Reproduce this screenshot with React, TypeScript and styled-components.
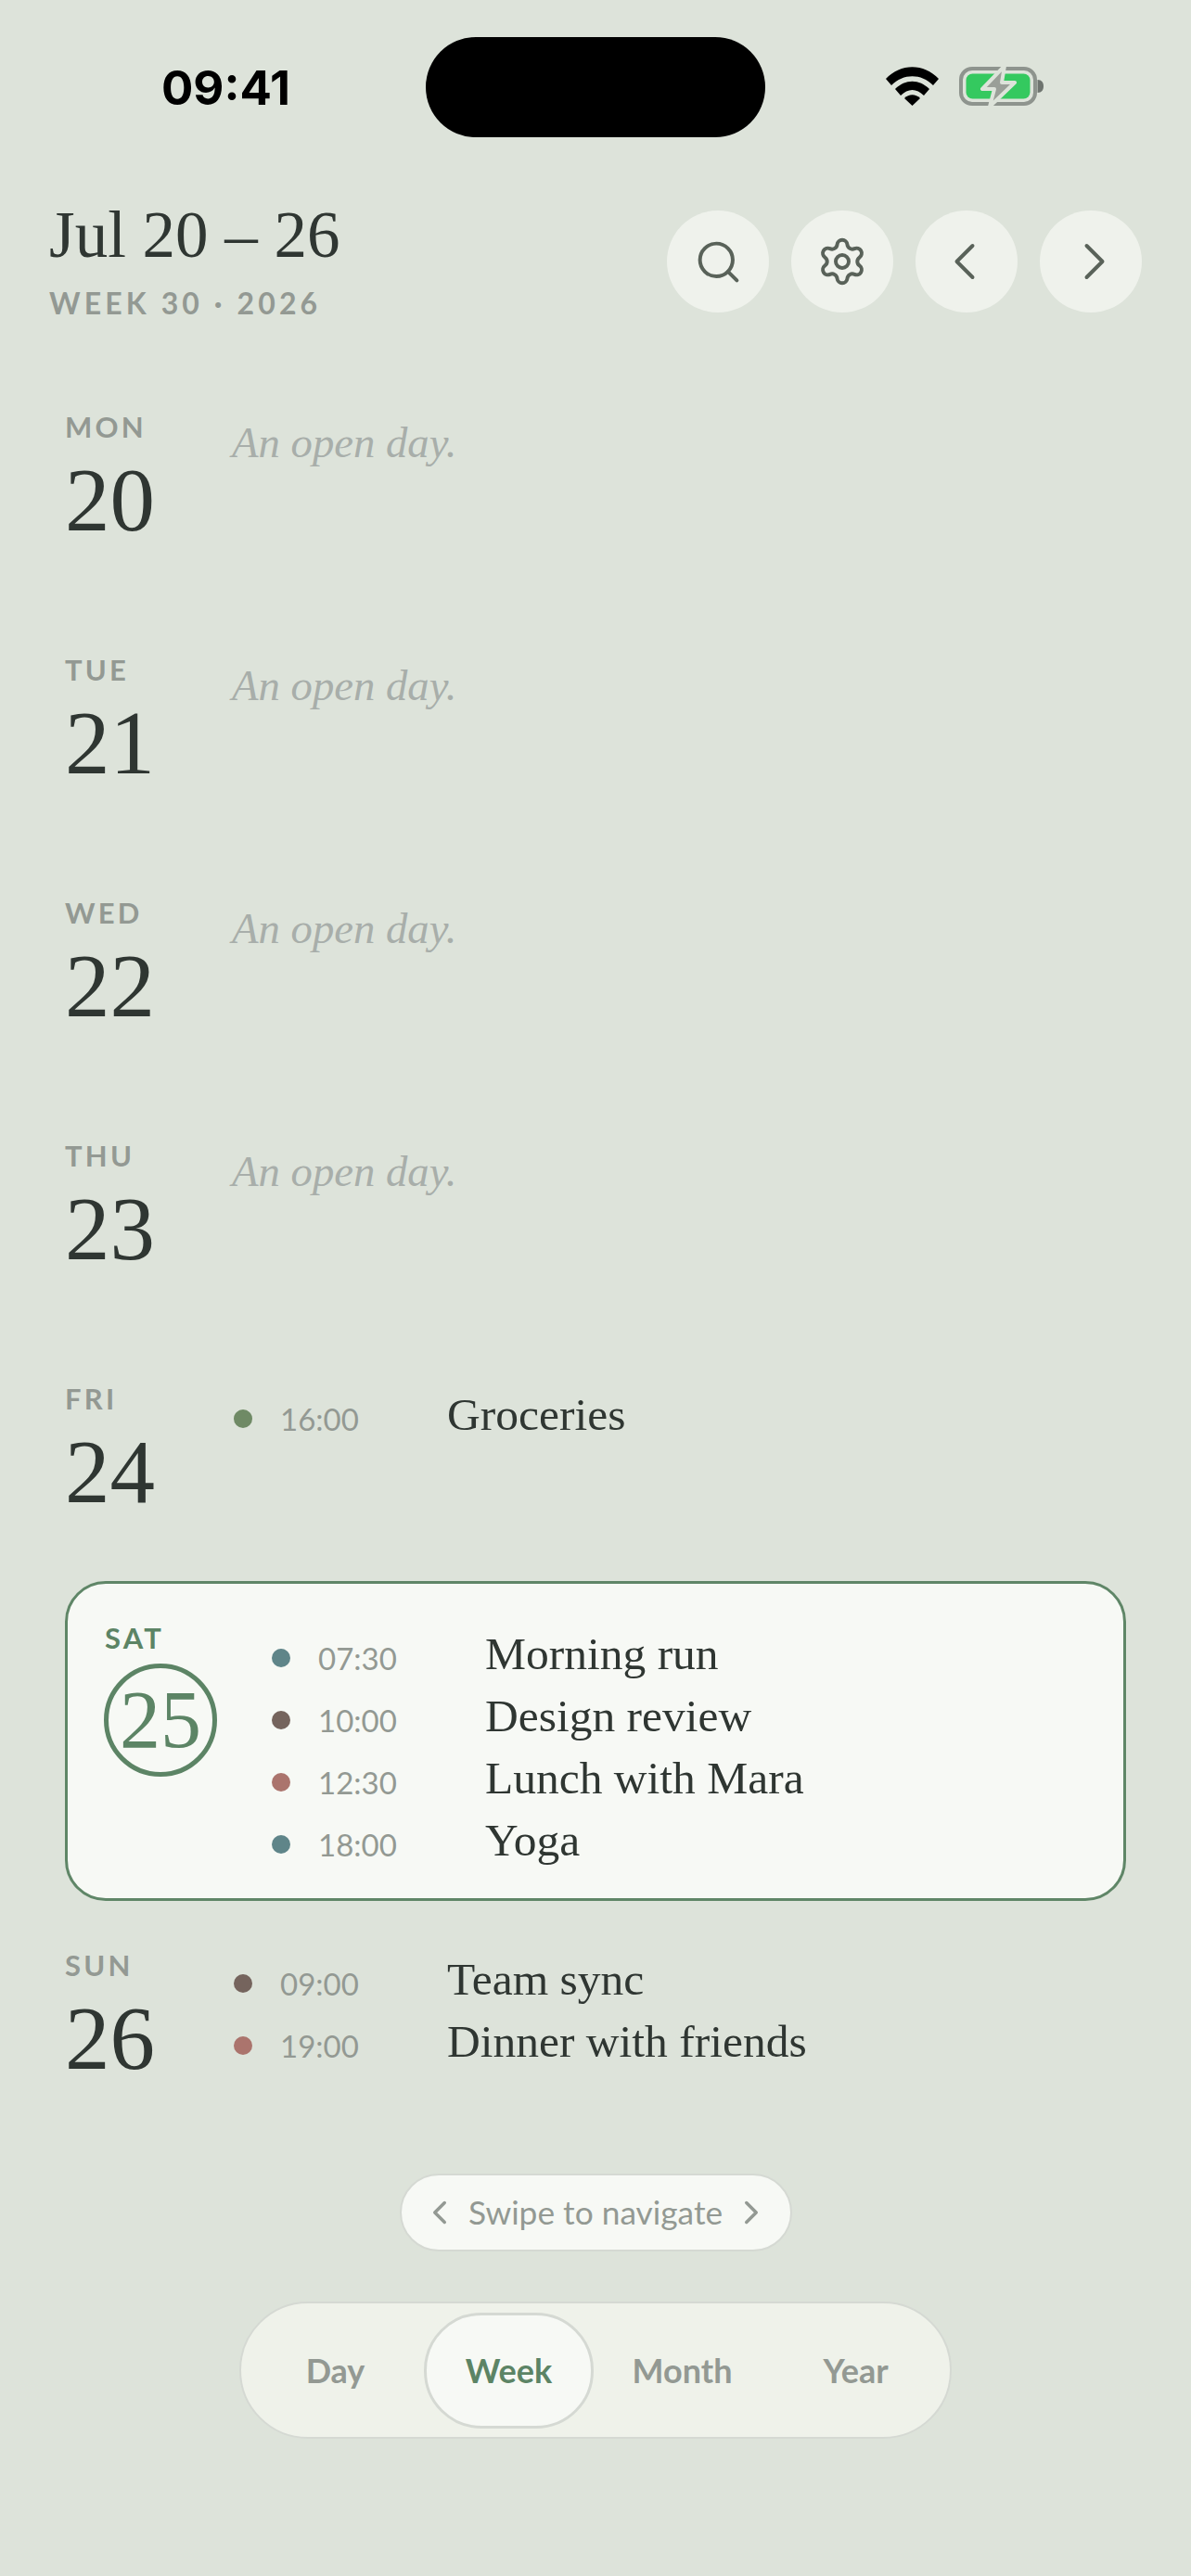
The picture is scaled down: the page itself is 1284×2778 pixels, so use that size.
import { createGlobalStyle, styled } from "styled-components";
import { ChevronLeft, ChevronRight, Search, Settings } from "lucide-react";

const GlobalStyle = createGlobalStyle`
  html, body {
    margin: 0;
    padding: 0;
    background: #dde3da;
  }
`;

const serif = `"Liberation Serif", serif`;
const sans = `Lato, "Noto Sans", sans-serif`;

const Page = styled.div`
  width: 1284px;
  height: 2778px;
  overflow: hidden;
  background: #dde3da;
  color: #2f3632;
`;

const StatusBar = styled.div`
  display: grid;
  grid-template-columns: 459px 366px 459px;
  padding-top: 40px;
  height: 107px;
`;

const Clock = styled.div`
  padding-left: 28px;
  text-align: center;
  font: 700 51px/107px Inter, sans-serif;
  color: #000;
  margin-top: 1px;
`;

const Island = styled.div`
  background: #000;
  border-radius: 54px;
`;

const StatusIcons = styled.div`
  padding-right: 28px;
  display: flex;
  justify-content: center;
  align-items: center;
  gap: 22px;
  margin-top: -3px;
`;

const Header = styled.header`
  display: flex;
  justify-content: space-between;
  align-items: flex-start;
  padding: 80px 53px 0 53px;
`;

const TitleBlock = styled.div`
  margin-top: -16px;
`;

const Title = styled.h1`
  margin: 0;
  font: 400 71px/84px ${serif};
  color: #2f3632;
`;

const WeekLabel = styled.div`
  margin-top: 12px;
  font: 700 32px/40px ${sans};
  letter-spacing: 4.1px;
  color: #939993;
`;

const Actions = styled.div`
  display: flex;
  gap: 24px;
`;

const RoundButton = styled.button`
  width: 110px;
  height: 110px;
  padding: 0;
  border: none;
  border-radius: 50%;
  background: #eff2ec;
  color: #596259;
  display: flex;
  align-items: center;
  justify-content: center;
`;

const PrevIcon = styled(ChevronLeft)`
  margin-right: 4px;
`;

const NextIcon = styled(ChevronRight)`
  margin-left: 8px;
`;

const Days = styled.main`
  margin-top: 93px;
`;

const Day = styled.section<{ $gap: number }>`
  display: flex;
  min-height: 222px;
  padding-left: 70px;
  margin-bottom: ${(p) => p.$gap}px;
`;

const DateColumn = styled.div<{ $width: number }>`
  width: ${(p) => p.$width}px;
  flex: none;
`;

const Weekday = styled.div<{ $today?: boolean }>`
  font: 700 31px/40px ${sans};
  letter-spacing: 3.2px;
  color: ${(p) => (p.$today ? "#5c8465" : "#939993")};
`;

const DayNumber = styled.div`
  font: 400 97px/100px ${serif};
  color: #2f3632;
  margin-top: 10px;
`;

const TodayCard = styled.section`
  display: flex;
  box-sizing: border-box;
  height: 345px;
  margin: 0 70px 49px;
  padding: 38px 40px 0;
  background: #f7f9f5;
  border: 3px solid #5f8667;
  border-radius: 44px;
`;

const TodayNumber = styled.div`
  box-sizing: border-box;
  width: 122px;
  height: 122px;
  margin-top: 8px;
  margin-left: -1px;
  border: 5px solid #5c8465;
  border-radius: 50%;
  display: flex;
  align-items: center;
  justify-content: center;
  font: 400 88px/1 ${serif};
  color: #5c8465;
`;

const Empty = styled.div`
  font: italic 400 46.7px/58px ${serif};
  color: #a8aeaa;
  margin-top: 8px;
`;

const Events = styled.div<{ $top: number }>`
  display: flex;
  flex-direction: column;
  gap: 7px;
  padding-top: ${(p) => p.$top}px;
`;

const EventRow = styled.div`
  display: flex;
  align-items: center;
  height: 60px;
`;

const Dot = styled.span<{ $color: string }>`
  flex: none;
  width: 20px;
  height: 20px;
  margin: 8px 30px 0 2px;
  border-radius: 50%;
  background: ${(p) => p.$color};
`;

const Time = styled.span`
  flex: none;
  width: 180px;
  font: 400 33px/60px ${sans};
  color: #939993;
  margin-top: 8px;
`;

const EventTitle = styled.span`
  font: 400 49.5px/60px ${serif};
  color: #2f3632;
`;

const Footer = styled.footer`
  display: flex;
  flex-direction: column;
  align-items: center;
  gap: 54px;
  margin-top: 23px;
`;

const SwipeHint = styled.div`
  box-sizing: border-box;
  display: flex;
  align-items: center;
  justify-content: center;
  gap: 10px;
  width: 423px;
  height: 84px;
  border: 2px solid #d5d9d3;
  border-radius: 42px;
  background: #f7f9f5;
  font: 400 35.3px/1 ${sans};
  color: #939993;
`;

const Segments = styled.nav`
  box-sizing: border-box;
  display: grid;
  grid-template-columns: repeat(4, 183px);
  gap: 4px;
  align-items: center;
  width: 768px;
  height: 148px;
  padding: 0 10px;
  border: 2px solid #d5d9d3;
  border-radius: 74px;
  background: #eff2ea;
`;

const Segment = styled.div<{ $active?: boolean }>`
  box-sizing: border-box;
  height: 125px;
  display: flex;
  align-items: center;
  justify-content: center;
  border: 3px solid ${(p) => (p.$active ? "#d5d9d3" : "transparent")};
  border-radius: 62px;
  background: ${(p) => (p.$active ? "#f7f9f5" : "transparent")};
  font: 700 36px/1 ${sans};
  color: ${(p) => (p.$active ? "#5c8465" : "#939993")};
`;

function WifiIcon() {
  return (
    <svg width="57" height="42" viewBox="0 0 57 42">
      <path d="M0 13 C16 -4 41 -4 57 13 L51 20 C38 7 19 7 6 20 Z" fill="#000" />
      <path d="M10 24 C21 13 36 13 47 24 L41 31 C33 23 24 23 16 31 Z" fill="#000" />
      <path d="M20 34 C25 29 32 29 37 34 L28.5 42 Z" fill="#000" />
    </svg>
  );
}

function BatteryIcon() {
  return (
    <svg width="92" height="44" viewBox="0 0 92 44">
      <rect x="2" y="3" width="80" height="38" rx="12" fill="none" stroke="#8e948e" strokeWidth="4" />
      <path d="M84.5 15 C89 15 91 18 91 22 C91 26 89 29 84.5 29 Z" fill="#6e746f" />
      <rect x="7.5" y="8.5" width="69" height="27" rx="7" fill="#34c95f" />
      <path
        d="M49 0 L25 25 H38 L33 44 L60 18 H46 Z"
        fill="#9a9f98"
        stroke="#dde3da"
        strokeWidth="4"
        strokeLinejoin="round"
      />
    </svg>
  );
}

type CalendarEvent = { time: string; title: string; color: string };

const TEAL = "#5f8589";
const BROWN = "#75645d";
const ROSE = "#ab746d";
const GREEN = "#6f8a65";

const week: { name: string; date: number; gap: number; events: CalendarEvent[] }[] = [
  { name: "MON", date: 20, gap: 40, events: [] },
  { name: "TUE", date: 21, gap: 40, events: [] },
  { name: "WED", date: 22, gap: 40, events: [] },
  { name: "THU", date: 23, gap: 40, events: [] },
  { name: "FRI", date: 24, gap: -5, events: [{ time: "16:00", title: "Groceries", color: GREEN }] },
];

const today: CalendarEvent[] = [
  { time: "07:30", title: "Morning run", color: TEAL },
  { time: "10:00", title: "Design review", color: BROWN },
  { time: "12:30", title: "Lunch with Mara", color: ROSE },
  { time: "18:00", title: "Yoga", color: TEAL },
];

const sunday: CalendarEvent[] = [
  { time: "09:00", title: "Team sync", color: BROWN },
  { time: "19:00", title: "Dinner with friends", color: ROSE },
];

function EventList({ events, top }: { events: CalendarEvent[]; top: number }) {
  return (
    <Events $top={top}>
      {events.map((e) => (
        <EventRow key={e.time}>
          <Dot $color={e.color} />
          <Time>{e.time}</Time>
          <EventTitle>{e.title}</EventTitle>
        </EventRow>
      ))}
    </Events>
  );
}

export default function App() {
  return (
    <Page>
      <GlobalStyle />
      <StatusBar>
        <Clock>09:41</Clock>
        <Island />
        <StatusIcons>
          <WifiIcon />
          <BatteryIcon />
        </StatusIcons>
      </StatusBar>

      <Header>
        <TitleBlock>
          <Title>Jul 20 – 26</Title>
          <WeekLabel>WEEK 30 · 2026</WeekLabel>
        </TitleBlock>
        <Actions>
          <RoundButton><Search size={53} strokeWidth={1.8} /></RoundButton>
          <RoundButton><Settings size={56} strokeWidth={1.7} /></RoundButton>
          <RoundButton><PrevIcon size={68} strokeWidth={1.4} /></RoundButton>
          <RoundButton><NextIcon size={68} strokeWidth={1.4} /></RoundButton>
        </Actions>
      </Header>

      <Days>
        {week.map((d) => (
          <Day key={d.name} $gap={d.gap}>
            <DateColumn $width={180}>
              <Weekday>{d.name}</Weekday>
              <DayNumber>{d.date}</DayNumber>
            </DateColumn>
            {d.events.length > 0 ? <EventList events={d.events} top={8} /> : <Empty>An open day.</Empty>}
          </Day>
        ))}

        <TodayCard>
          <DateColumn $width={178}>
            <Weekday $today>SAT</Weekday>
            <TodayNumber>25</TodayNumber>
          </DateColumn>
          <EventList events={today} top={8} />
        </TodayCard>

        <Day $gap={0}>
          <DateColumn $width={180}>
            <Weekday>SUN</Weekday>
            <DayNumber>26</DayNumber>
          </DateColumn>
          <EventList events={sunday} top={6} />
        </Day>
      </Days>

      <Footer>
        <SwipeHint>
          <ChevronLeft size={42} strokeWidth={2} />
          Swipe to navigate
          <ChevronRight size={42} strokeWidth={2} />
        </SwipeHint>
        <Segments>
          <Segment>Day</Segment>
          <Segment $active>Week</Segment>
          <Segment>Month</Segment>
          <Segment>Year</Segment>
        </Segments>
      </Footer>
    </Page>
  );
}
